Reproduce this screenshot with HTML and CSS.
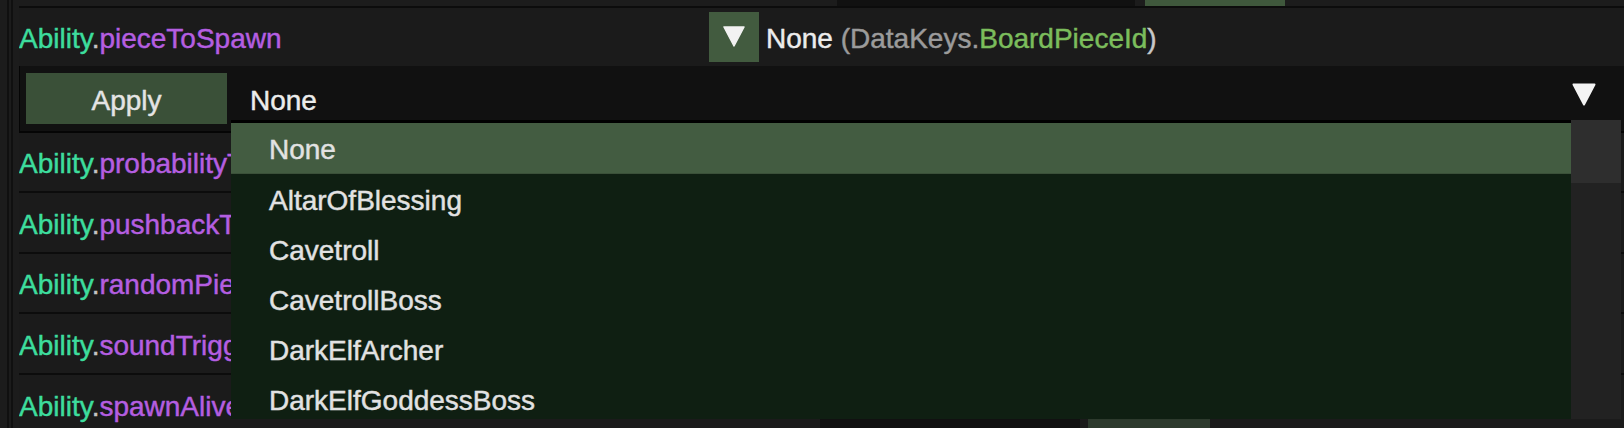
FILE: index.html
```html
<!DOCTYPE html>
<html>
<head>
<meta charset="utf-8">
<link rel="stylesheet" href="styles.css">
</head>
<body>
<div class="page">
  <div class="rail"><div class="line"></div><div class="line"></div></div>
  <div class="main">
    <div class="strip">
      <div class="strip-input"></div>
      <div class="strip-btn"></div>
    </div>
    <div class="row row-first">
      <div class="label"><span class="cls">Ability</span><span class="dot">.</span><span class="prop">pieceToSpawn</span></div>
      <div class="toggle">
        <svg width="22" height="21" viewBox="0 0 22 21"><polygon points="1,1 21,1 11,20" fill="#f2f2f2" stroke="#f2f2f2" stroke-width="1.5" stroke-linejoin="round"/></svg>
      </div>
      <div class="value"><span class="v-main">None</span> <span class="v-dim">(DataKeys.</span><span class="v-type">BoardPieceId</span><span class="v-close">)</span></div>
    </div>
    <div class="editor">
      <div class="apply">Apply</div>
      <div class="select-value">None</div>
      <svg class="select-arrow" width="24" height="23" viewBox="0 0 24 23"><polygon points="1.5,1.5 22.5,1.5 12,21.5" fill="#f4f4f4" stroke="#f4f4f4" stroke-width="2" stroke-linejoin="round"/></svg>
    </div>
    <div class="row r58 nb"><div class="label"><span class="cls">Ability</span><span class="dot">.</span><span class="prop">probabilityToSpawn</span></div></div>
    <div class="row r59"><div class="label"><span class="cls">Ability</span><span class="dot">.</span><span class="prop">pushbackTarget</span></div></div>
    <div class="row r58"><div class="label"><span class="cls">Ability</span><span class="dot">.</span><span class="prop">randomPieceToSpawn</span></div></div>
    <div class="row r59"><div class="label"><span class="cls">Ability</span><span class="dot">.</span><span class="prop">soundTrigger</span></div></div>
    <div class="row r58 last">
      <div class="label short"><span class="cls">Ability</span><span class="dot">.</span><span class="prop">spawnAliveOnBoard</span></div>
      <div class="bottom-input"></div>
      <div class="bottom-btn"></div>
    </div>
  </div>
  <div class="popup">
    <div class="list">
      <div class="item active">None</div>
      <div class="item">AltarOfBlessing</div>
      <div class="item">Cavetroll</div>
      <div class="item">CavetrollBoss</div>
      <div class="item">DarkElfArcher</div>
      <div class="item">DarkElfGoddessBoss</div>
      <div class="item">DarkElfMage</div>
    </div>
    <div class="scroll"><div class="thumb"></div></div>
  </div>
</div>
</body>
</html>
```
FILE: styles.css
```css
html, body {
  margin: 0;
  padding: 0;
  background: #1c1c1c;
  overflow: hidden;
}
body {
  font-family: "Liberation Sans", Arial, sans-serif;
  font-size: 28px;
  color: #e6e6e6;
  -webkit-text-stroke: 0.45px currentColor;
}
.page {
  position: relative;
  display: flex;
  width: 1624px;
  height: 428px;
  overflow: hidden;
}
.rail {
  display: flex;
  gap: 2px;
  width: 19px;
  padding-left: 7px;
  box-sizing: border-box;
  flex: none;
}
.line {
  width: 2px;
  background: #101010;
}
.main {
  flex: 1;
  display: flex;
  flex-direction: column;
  overflow: hidden;
}
.strip {
  height: 6px;
  display: flex;
  gap: 10px;
  padding-left: 818px;
  flex: none;
}
.strip-input { width: 298px; background: #111111; }
.strip-btn { width: 140px; background: #3f583c; }
.row {
  display: flex;
  align-items: center;
  border-top: 2px solid #0c0c0c;
  background: #1b1b1b;
  flex: none;
}
.row.nb { border-top: none; }
.row-first { height: 58px; }
.r58 { height: 58px; }
.r59 { height: 59px; }
.row.last { height: 60px; }
.label {
  width: 690px;
  flex: none;
  white-space: nowrap;
  overflow: hidden;
  padding-top: 4px;
}
.label.short { width: 801px; }
.cls { color: #3ddd9d; }
.dot { color: #c4c4c4; }
.prop { color: #b55ee1; }
.toggle {
  width: 50px;
  height: 50px;
  background: #425b3f;
  display: flex;
  align-items: center;
  justify-content: center;
  flex: none;
  margin-right: 7px;
}
.toggle svg { margin-top: -1px; }
.value { white-space: nowrap; padding-top: 4px; }
.v-main { color: #ececec; }
.v-dim { color: #9b9b9b; }
.v-type { color: #7bbd5c; }
.v-close { color: #c8c8c8; }
.editor {
  height: 58px;
  background: #111111;
  border-left: 1px solid #050505;
  border-bottom: 2px solid #050505;
  display: flex;
  align-items: flex-start;
  padding: 7px 28px 0 6px;
  flex: none;
}
.apply {
  width: 201px;
  height: 51px;
  box-sizing: border-box;
  padding-top: 4px;
  background: #3a5038;
  color: #e4e4e4;
  display: flex;
  align-items: center;
  justify-content: center;
  flex: none;
}
.select-value {
  flex: 1;
  height: 51px;
  box-sizing: border-box;
  display: flex;
  align-items: center;
  padding: 4px 0 0 23px;
  color: #ececec;
}
.select-arrow { margin-top: 10px; }
.bottom-input {
  width: 260px;
  height: 50px;
  background: #111111;
  margin-top: 44px;
  flex: none;
}
.bottom-btn {
  width: 122px;
  height: 50px;
  background: #2d3a2d;
  margin-left: 8px;
  margin-top: 44px;
  flex: none;
}
.popup {
  position: absolute;
  left: 231px;
  top: 120px;
  width: 1390px;
  height: 299px;
  display: flex;
}
.list {
  flex: 1;
  background: #0f1f12;
  border-top: 3px solid #000000;
  overflow: hidden;
}
.item {
  height: 50px;
  box-sizing: border-box;
  padding-top: 3px;
  display: flex;
  align-items: center;
  padding-left: 38px;
  color: #e2e2e2;
}
.item.active {
  height: 51px;
  background: #435c41;
  border-bottom: 1px solid #3b5039;
}
.scroll {
  width: 50px;
  background: #222222;
  flex: none;
}
.thumb {
  height: 63px;
  background: #2e2e2e;
}
```
